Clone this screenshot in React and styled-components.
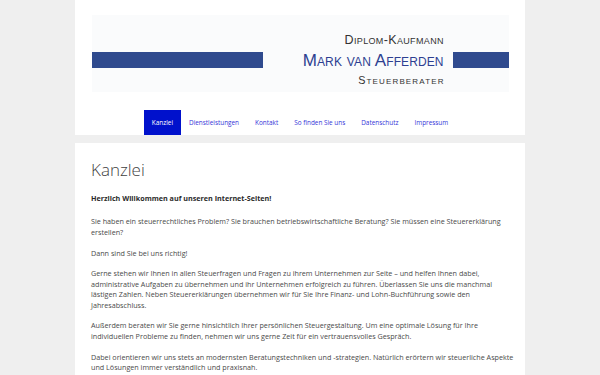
import React from "react";
import styled, { createGlobalStyle } from "styled-components";

const Global = createGlobalStyle`
  html, body { margin: 0; padding: 0; }
  body {
    background: #efefef;
    font-family: "Open Sans", "Liberation Sans", sans-serif;
    color: #4a4a4a;
  }
`;

const Page = styled.div`
  width: 450px;
  margin: 0 auto;
  display: flex;
  flex-direction: column;
  gap: 8px;
`;

const Header = styled.header`
  background: #fff;
  padding-top: 15px;
  display: flex;
  flex-direction: column;
  align-items: center;
  gap: 18px;
`;

const Logo = styled.div`
  width: 417px;
  height: 77px;
  box-sizing: border-box;
  padding-top: 13px;
  background: #fafbfc;
  display: flex;
  align-items: center;
`;

const Bar = styled.div`
  width: ${(p) => p.$w}px;
  height: 16px;
  background: #2f4a8e;
  flex: none;
`;

const Spacer = styled.div`
  flex: 1;
`;

const Lines = styled.div`
  display: flex;
  flex-direction: column;
  align-items: flex-end;
  margin-right: 9px;
  font-family: "Liberation Sans", Arial, sans-serif;
  font-variant: small-caps;
`;

const Line = styled.div`
  font-size: ${(p) => p.$size}px;
  line-height: ${(p) => p.$lh}px;
  letter-spacing: ${(p) => p.$ls || 0}px;
  margin-right: ${(p) => -(p.$ls || 0)}px;
  color: ${(p) => p.$color};
  white-space: nowrap;
`;

const Nav = styled.nav`
  display: flex;
  height: 25px;
`;

const NavItem = styled.a`
  display: flex;
  align-items: center;
  padding: 0 8px;
  font-size: 6.4px;
  color: ${(p) => (p.$active ? "#fff" : "#3434d8")};
  background: ${(p) => (p.$active ? "#0011cc" : "transparent")};
  text-decoration: none;
`;

const Card = styled.main`
  background: #fff;
  padding: 15px 7px 0 16px;
  min-height: 240px;
`;

const Title = styled.h1`
  margin: 0 0 11px;
  font-weight: 300;
  font-size: 17px;
  line-height: 24px;
  color: #3f3f3f;
`;

const P = styled.p`
  margin: 0 0 ${(p) => p.$mb || 10.4}px;
  font-size: 7.2px;
  line-height: 10.4px;
  color: #4a4a4a;
`;

const Strong = styled.strong`
  font-weight: 700;
  color: #2a2a2a;
`;

const items = ["Kanzlei", "Dienstleistungen", "Kontakt", "So finden Sie uns", "Datenschutz", "Impressum"];

export default function App() {
  return (
    <>
      <Global />
      <Page>
        <Header>
          <Logo>
            <Bar $w={171} />
            <Spacer />
            <Lines>
              <Line $size={12.5} $lh={19} $ls={0.35} $color="#333">Diplom-Kaufmann</Line>
              <Line $size={17} $lh={21} $ls={0.1} $color="#2d3f91">Mark van Afferden</Line>
              <Line $size={10.8} $lh={19} $ls={1.15} $color="#333">Steuerberater</Line>
            </Lines>
            <Bar $w={56} />
          </Logo>
          <Nav>
            {items.map((t, i) => (
              <NavItem key={t} href="#" $active={i === 0}>{t}</NavItem>
            ))}
          </Nav>
        </Header>
        <Card>
          <Title>Kanzlei</Title>
          <P $mb={13}><Strong>Herzlich Willkommen auf unseren Internet-Seiten!</Strong></P>
          <P>Sie haben ein steuerrechtliches Problem? Sie brauchen betriebswirtschaftliche Beratung? Sie müssen eine Steuererklärung erstellen?</P>
          <P>Dann sind Sie bei uns richtig!</P>
          <P>Gerne stehen wir Ihnen in allen Steuerfragen und Fragen zu ihrem Unternehmen zur Seite – und helfen Ihnen dabei, administrative Aufgaben zu übernehmen und ihr Unternehmen erfolgreich zu führen. Überlassen Sie uns die manchmal lästigen Zahlen. Neben Steuererklärungen übernehmen wir für Sie Ihre Finanz- und Lohn-Buchführung sowie den Jahresabschluss.</P>
          <P>Außerdem beraten wir Sie gerne hinsichtlich Ihrer persönlichen Steuergestaltung. Um eine optimale Lösung für Ihre individuellen Probleme zu finden, nehmen wir uns gerne Zeit für ein vertrauensvolles Gespräch.</P>
          <P>Dabei orientieren wir uns stets an modernsten Beratungstechniken und -strategien. Natürlich erörtern wir steuerliche Aspekte und Lösungen immer verständlich und praxisnah.</P>
        </Card>
      </Page>
    </>
  );
}
